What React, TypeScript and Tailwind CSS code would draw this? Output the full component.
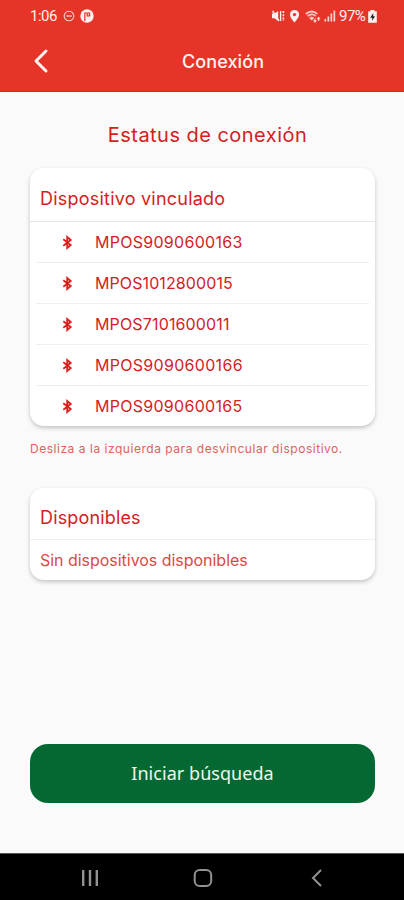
import { ChevronLeft } from 'lucide-react';

const devices = [
  { name: 'MPOS9090600163', spacing: 'tracking-[0.28px]' },
  { name: 'MPOS1012800015', spacing: 'tracking-[0.1px]' },
  { name: 'MPOS7101600011', spacing: 'tracking-[0.15px]' },
  { name: 'MPOS9090600166', spacing: 'tracking-[0.3px]' },
  { name: 'MPOS9090600165', spacing: 'tracking-[0.28px]' },
];

function StatusBar() {
  return (
    <div className="flex h-8 items-center justify-between pl-[30px] pr-[27px] text-[#fff0ee]">
      <div className="flex items-center">
        <span className="w-[33px] whitespace-nowrap font-['Roboto',sans-serif] text-[15px] leading-none tracking-[-0.5px]">1:06</span>
        <svg className="h-[12px] w-[12px] opacity-85" viewBox="0 0 12 12" fill="none" stroke="currentColor">
          <circle cx="6" cy="6" r="4.8" strokeWidth="1.1" />
          <path d="M3.2 6h5.6" strokeWidth="1.3" />
        </svg>
        <svg className="ml-[5px] h-[14px] w-[14px]" viewBox="0 0 14 14">
          <circle cx="7" cy="7" r="6.7" fill="currentColor" />
          <path d="M4.8 12V4h2.4v3.4M7.2 4.2h2.4v2.6H7.6" fill="none" stroke="#e73429" strokeWidth="1.2" />
        </svg>
      </div>

      <div className="flex items-center">
        {/* muted / vibrate */}
        <svg className="h-[12px] w-[13px]" viewBox="0 0 13 12">
          <path d="M0 3.6h2.4L6.2 1v10L2.4 8.2H0z" fill="currentColor" />
          <path d="M.6.8 7 11" stroke="currentColor" strokeWidth="1.5" />
          <path d="M8.6 1v10" stroke="currentColor" strokeWidth="1.3" />
          <path d="M11.4 1v10" stroke="currentColor" strokeWidth="1.6" strokeDasharray="2 1.2" />
        </svg>
        <svg className="ml-[4px] h-[13px] w-[11px]" viewBox="0 0 11 13">
          <path d="M5.5 0A4.6 4.6 0 0 0 .9 4.6C.9 8 5.5 12.6 5.5 12.6S10.1 8 10.1 4.6A4.6 4.6 0 0 0 5.5 0z" fill="currentColor" />
          <circle cx="5.5" cy="4.6" r="1.7" fill="#e73429" />
        </svg>
        <svg className="ml-[5px] h-[13px] w-[16px] opacity-80" viewBox="0 0 16 13" fill="none" stroke="currentColor" strokeWidth="1.7">
          <path d="M.8 4Q7 -1 12.4 4M2.6 6.2Q7 2.7 10.8 6.2" />
          <path d="M4.4 7.8Q6.7 6 9 7.8L6.7 10.2z" fill="currentColor" strokeWidth="0.6" />
          <path d="M10 12V8.6M8.6 10.4 10 12l1.4-1.6M13.6 11V7.4M12.2 9l1.4-1.6L15 9" strokeWidth="1.2" />
        </svg>
        <svg className="ml-[3px] h-[12px] w-[12px] opacity-85" viewBox="0 0 12 12" fill="currentColor">
          <path d="M.5 9h1.7v2.5H.5zM3.5 6.5h1.7v5H3.5zM6.5 3.5h1.7v8H6.5zM9.5.5h1.7v11H9.5z" />
        </svg>
        <span className="ml-[3px] mt-px w-[29px] whitespace-nowrap font-['Roboto',sans-serif] text-[15px] leading-none tracking-[-0.5px]">97%</span>
        <svg className="h-[13px] w-[9px]" viewBox="0 0 9 13">
          <path d="M2.5 0h4v1.3h2.3v11.5H.2V1.3h2.3z" fill="currentColor" />
          <path d="M5.2 3 2.2 7.8h2v3l2.8-4.6H5.2z" fill="#222" />
        </svg>
      </div>
    </div>
  );
}

function BluetoothIcon() {
  return (
    <svg className="h-[15px] w-[11px] shrink-0" viewBox="0 0 11 15" fill="none" stroke="#d8201d" strokeWidth="1.8">
      <path d="M1.3 4.3 8.7 10 5.2 13V2l3.5 3-7.4 5.7" />
    </svg>
  );
}

export default function App() {
  return (
    <div className="flex h-[900px] w-full flex-col overflow-hidden bg-[#fafafa] font-['Inter',sans-serif] text-[#d4211f]">
      <header className="h-[92px] shrink-0 border-b border-[#d92a1c] bg-[#e73429]">
        <StatusBar />
        <div className="flex h-[58px] items-center text-[#fff3f1]">
          <ChevronLeft className="ml-[21px] h-[40px] w-[40px]" strokeWidth={1.8} />
          <h1 className="w-[323px] whitespace-nowrap pl-[121px] text-[18px] font-medium tracking-[0.1px]">Conexión</h1>
        </div>
      </header>

      <main className="flex flex-1 flex-col px-[30px] pr-[29px]">
        <h2 className="mt-[29px] self-center whitespace-nowrap pl-[10px] text-[20px] leading-7 tracking-[0.47px]">Estatus de conexión</h2>

        <section className="mt-[19px] h-[258px] shrink-0 rounded-[14px] bg-white shadow-[0_2px_4px_rgba(0,0,0,0.22)]">
          <h3 className="h-[54px] border-b border-[#e6e6e6] pl-[10px] pt-[17px] text-[18px] leading-7 tracking-[0.22px]">
            Dispositivo vinculado
          </h3>
          <ul className="px-[6px]">
            {devices.map((device) => (
              <li key={device.name} className="flex h-[41px] items-center border-b border-[#eeeeee] pl-[26px] last:h-[40px] last:border-b-0">
                <BluetoothIcon />
                <span className={`ml-[22px] text-[16px] ${device.spacing}`}>{device.name}</span>
              </li>
            ))}
          </ul>
        </section>

        <p className="mt-[13px] whitespace-nowrap text-[12px] leading-5 tracking-[0.53px] text-[#dd6260]">
          Desliza a la izquierda para desvincular dispositivo.
        </p>

        <section className="mt-[29px] h-[92px] shrink-0 rounded-[14px] bg-white shadow-[0_2px_4px_rgba(0,0,0,0.22)]">
          <h3 className="h-[52px] border-b border-[#eeeeee] pl-[10px] pt-[16px] text-[18px] leading-7 tracking-[0.15px]">Disponibles</h3>
          <p className="pl-[10px] pt-[8px] text-[16px] leading-6 tracking-[-0.03px] text-[#d94a47]">Sin dispositivos disponibles</p>
        </section>

        <button className="mt-auto mb-[50px] h-[59px] shrink-0 rounded-[18px] bg-[#036831] font-['Noto_Sans',sans-serif] text-[18px] tracking-[0.05px] text-[#f0f7ee]">
          Iniciar búsqueda
        </button>
      </main>

      <nav className="flex h-[47px] shrink-0 items-center border-t border-[#555] bg-black pl-[81px] pt-[2px] text-[#929292]">
        <svg className="h-[18px] w-[18px]" viewBox="0 0 18 18" stroke="currentColor" strokeWidth="2.4">
          <path d="M2.2 1v16M9 1v16M15.8 1v16" />
        </svg>
        <svg className="ml-[94px] h-[20px] w-[20px]" viewBox="0 0 20 20" fill="none" stroke="currentColor" strokeWidth="2">
          <rect x="1.7" y="2" width="16.5" height="16" rx="5" />
        </svg>
        <svg className="ml-[98px] h-[18px] w-[12px]" viewBox="0 0 12 18" fill="none" stroke="currentColor" strokeWidth="2">
          <path d="M10 1 2 9l8 8" />
        </svg>
      </nav>
    </div>
  );
}
